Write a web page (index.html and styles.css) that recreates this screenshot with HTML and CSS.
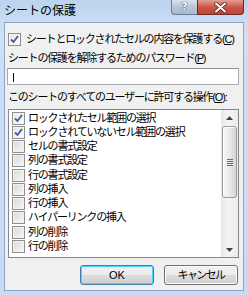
FILE: index.html
```html
<!DOCTYPE html>
<html lang="ja">
<head>
    <meta charset="UTF-8">
    <title>シートの保護</title>
    <link rel="stylesheet" href="styles.css">
</head>
<body>
    <div class="window">
        <div class="titlebar">
            <span class="title">シートの保護</span>
            <div class="caption-btns">
                <span class="btn-help">?</span>
                <span class="btn-close">
                    <svg width="13" height="11" viewBox="0 0 13 11">
                        <path d="M2 1.5 L11 9.5 M11 1.5 L2 9.5" stroke="#4a2420" stroke-width="3.6" stroke-linecap="round"/>
                        <path d="M2 1.5 L11 9.5 M11 1.5 L2 9.5" stroke="#ffffff" stroke-width="2" stroke-linecap="round"/>
                    </svg>
                </span>
            </div>
        </div>
        <div class="client">
            <div class="check-row">
                <span class="cb checked">
                    <svg width="9" height="9" viewBox="0 0 9 9"><path d="M1 4.5 L3.5 7 L8 1" fill="none" stroke="#3f5a9e" stroke-width="1.8"/></svg>
                </span>
                <span>シートとロックされたセルの内容を保護する(<u>C</u>)</span>
            </div>
            <div class="label">シートの保護を解除するためのパスワード(<u>P</u>)</div>
            <div class="input"><span class="caret"></span></div>
            <div class="label">このシートのすべてのユーザーに許可する操作(<u>O</u>):</div>
            <div class="listbox">
                <ul class="items">
                    <li class="item"><span class="cb checked"><svg width="9" height="9" viewBox="0 0 9 9"><path d="M1 4.5 L3.5 7 L8 1" fill="none" stroke="#3f5a9e" stroke-width="1.8"/></svg></span>ロックされたセル範囲の選択</li>
                    <li class="item"><span class="cb checked"><svg width="9" height="9" viewBox="0 0 9 9"><path d="M1 4.5 L3.5 7 L8 1" fill="none" stroke="#3f5a9e" stroke-width="1.8"/></svg></span>ロックされていないセル範囲の選択</li>
                    <li class="item"><span class="cb"></span>セルの書式設定</li>
                    <li class="item"><span class="cb"></span>列の書式設定</li>
                    <li class="item"><span class="cb"></span>行の書式設定</li>
                    <li class="item"><span class="cb"></span>列の挿入</li>
                    <li class="item"><span class="cb"></span>行の挿入</li>
                    <li class="item"><span class="cb"></span>ハイパーリンクの挿入</li>
                    <li class="item"><span class="cb"></span>列の削除</li>
                    <li class="item"><span class="cb"></span>行の削除</li>
                </ul>
                <div class="scrollbar">
                    <div class="arrow up"><svg width="7" height="4" viewBox="0 0 7 4"><path d="M0 4 L3.5 0 L7 4 Z" fill="#404040"/></svg></div>
                    <div class="track">
                        <div class="thumb">
                            <span class="grip"></span>
                        </div>
                    </div>
                    <div class="arrow down"><svg width="7" height="4" viewBox="0 0 7 4"><path d="M0 0 L3.5 4 L7 0 Z" fill="#404040"/></svg></div>
                </div>
            </div>
            <div class="buttons">
                <button class="ok">OK</button>
                <button class="cancel">キャンセル</button>
            </div>
        </div>
    </div>
</body>
</html>
```

FILE: styles.css
```css
body {
    margin: 0;
    font-family: "Liberation Sans", "Noto Sans CJK JP", sans-serif;
    font-size: 11px;
    color: #000;
}
.window {
    width: 248px;
    height: 295px;
    background: linear-gradient(#bcd3ee, #cde0f5 30px, #c6dbf2);
    display: flex;
    flex-direction: column;
}
.titlebar {
    height: 22px;
    display: flex;
    justify-content: space-between;
    align-items: flex-start;
}
.title {
    font-size: 12px;
    line-height: 14px;
    padding: 4px 0 0 4px;
}
.caption-btns {
    display: flex;
    margin-right: 4px;
}
.btn-help, .btn-close {
    height: 15px;
    box-sizing: border-box;
    display: flex;
    align-items: center;
    justify-content: center;
}
.btn-help {
    width: 26px;
    border: 1px solid #6d7f98;
    border-top: none;
    border-right: none;
    border-radius: 0 0 0 4px;
    background: linear-gradient(#d9e2ee, #b8c6d9 50%, #a7b8ce);
    color: #fff;
    font-family: "DejaVu Sans", sans-serif;
    font-weight: bold;
    font-size: 11px;
    line-height: 14px;
    text-shadow: 0 0 1px #2a3444, 0 0 1px #2a3444;
}
.btn-close {
    width: 47px;
    border: 1px solid #6b2a22;
    border-top: none;
    border-radius: 0 0 4px 0;
    background: linear-gradient(#e3a092, #c9574a 50%, #c44332);
}
.client {
    margin: 0 4px;
    height: 269px;
    box-sizing: border-box;
    border: 1px solid #8fa5c2;
    background: #f0f0f0;
    padding: 9px 4px 0 3px;
    letter-spacing: -1.2px;
}
.check-row {
    display: flex;
    align-items: center;
    height: 14px;
    line-height: 14px;
    white-space: nowrap;
}
.cb {
    width: 13px;
    height: 13px;
    box-sizing: border-box;
    flex: none;
    border: 1px solid #8e8f8f;
    background: linear-gradient(135deg, #d8d8d8, #f8f8f8);
    box-shadow: inset 0 0 0 1px #f4f4f4;
    display: flex;
    align-items: center;
    justify-content: center;
    margin-right: 5px;
}
.cb.checked {
    background: linear-gradient(135deg, #e4e4e4, #ffffff);
}
.label {
    height: 14px;
    line-height: 14px;
    margin-top: 5px;
    white-space: nowrap;
}
.input {
    margin: 3px 0 0 -1px;
    width: 232px;
    height: 17px;
    box-sizing: border-box;
    border: 1px solid #abadb3;
    border-top-color: #8e9096;
    background: #fff;
    display: flex;
}
.caret {
    width: 1px;
    height: 9px;
    margin: 4px 0 0 5px;
    background: #000;
}
.listbox {
    margin-top: 5px;
    width: 231px;
    height: 149px;
    box-sizing: border-box;
    border: 1px solid #828790;
    background: #fff;
    display: flex;
}
.items {
    list-style: none;
    margin: 0;
    padding: 1px 0 0 3px;
    flex: 1;
    overflow: hidden;
}
.item {
    height: 14.25px;
    line-height: 13px;
    display: flex;
    align-items: center;
    white-space: nowrap;
}
.item .cb {
    margin-right: 3px;
}
.scrollbar {
    width: 17px;
    display: flex;
    flex-direction: column;
    background: linear-gradient(90deg, #e6e6e6, #f4f4f4 40%, #ececec);
}
.arrow {
    height: 15px;
    display: flex;
    align-items: center;
    justify-content: center;
    flex: none;
}
.track {
    flex: 1;
    padding: 1px 0;
}
.thumb {
    margin: 0 1px;
    height: 72px;
    box-sizing: border-box;
    border: 1px solid #9b9b9b;
    border-radius: 3px;
    background: linear-gradient(90deg, #f6f6f6, #eaeaea 50%, #d4d4d4);
    box-shadow: inset 1px 1px 0 #fff;
    display: flex;
    align-items: center;
    justify-content: center;
}
.grip {
    width: 6px;
    height: 7px;
    background: repeating-linear-gradient(#6a6a6a 0 1px, transparent 1px 2px);
}
.buttons {
    margin-top: 7px;
    padding-right: 1px;
    display: flex;
    justify-content: flex-end;
    gap: 10px;
}
.buttons button {
    width: 74px;
    height: 20px;
    box-sizing: border-box;
    border: 1px solid #707070;
    border-radius: 3px;
    background: linear-gradient(#f2f2f2, #ebebeb 50%, #dddddd 50%, #cfcfcf);
    box-shadow: inset 0 0 0 1px #fbfbfb;
    font-family: "Liberation Sans", "Noto Sans CJK JP", sans-serif;
    font-size: 11px;
    line-height: 16px;
    padding: 0;
    color: #000;
}
.buttons .ok {
    border-color: #3c7fb1;
    box-shadow: inset 0 0 0 1px #48d7fb;
}
.buttons .cancel {
    letter-spacing: -1.6px;
}
```
